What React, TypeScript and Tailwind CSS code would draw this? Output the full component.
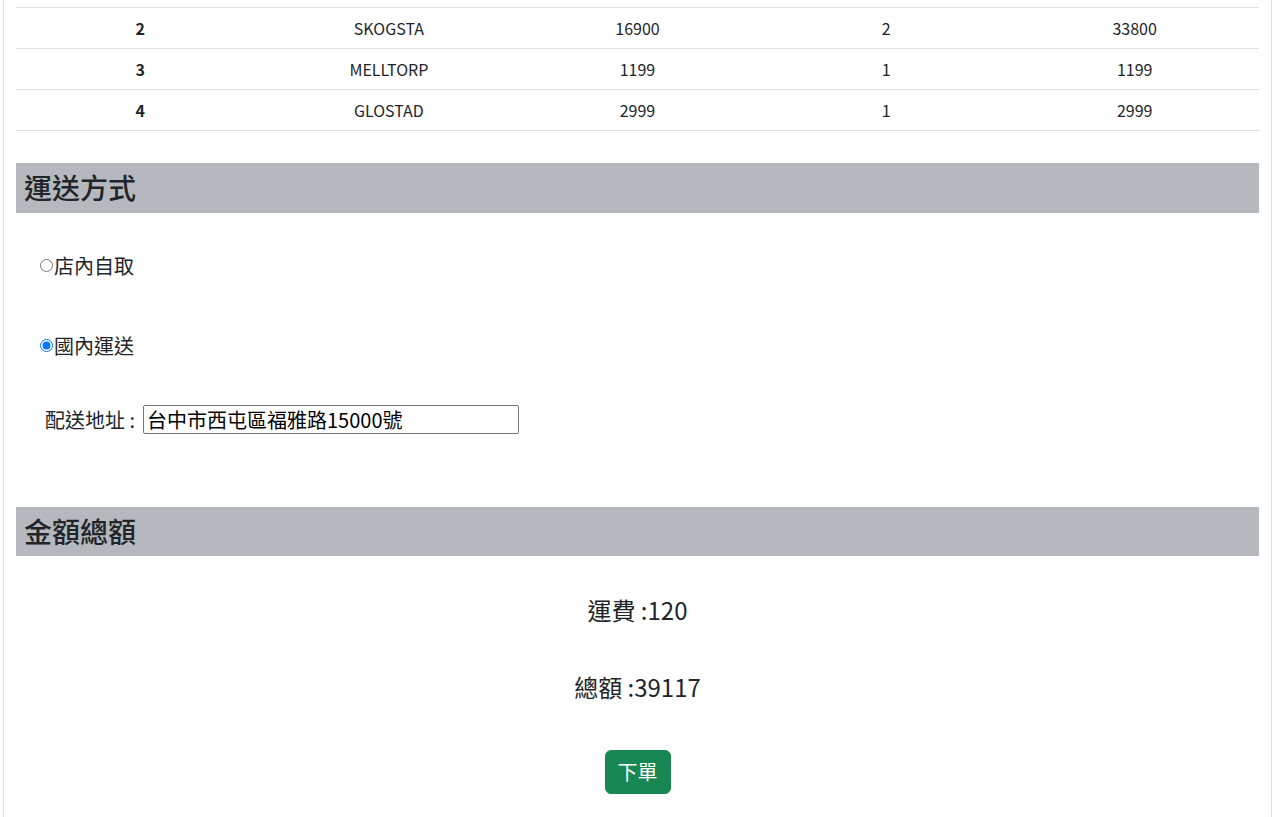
import { useState } from "react";

const rows = [
  { no: 2, name: "SKOGSTA", price: 16900, qty: 2, total: 33800 },
  { no: 3, name: "MELLTORP", price: 1199, qty: 1, total: 1199 },
  { no: 4, name: "GLOSTAD", price: 2999, qty: 1, total: 2999 },
];

const SectionBar = ({ title }: { title: string }) => (
  <div className="bg-[#b5b8bc] px-2 py-2">
    <h3 className="text-[28px] leading-[1.2] font-medium text-[#212529]">{title}</h3>
  </div>
);

export default function App() {
  const [method, setMethod] = useState("ship");
  const [address, setAddress] = useState("台中市西屯區福雅路15000號");

  return (
    <div
      className="min-h-[817px] bg-white text-[#212529]"
      style={{ fontFamily: '"Noto Sans CJK TC", "Noto Sans", sans-serif' }}
    >
      <div className="ml-[3px] mr-[1px] min-h-[817px] border-x border-[#dee2e6] px-3">
        <div className="h-[7px]" />
        <table className="w-full table-fixed border-collapse text-center text-[16px] leading-6">
          <tbody>
            {rows.map((r) => (
              <tr key={r.no} className="border-y border-[#dee2e6]">
                <th className="py-2 font-bold">{r.no}</th>
                <td className="py-2">{r.name}</td>
                <td className="py-2">{r.price}</td>
                <td className="py-2">{r.qty}</td>
                <td className="py-2">{r.total}</td>
              </tr>
            ))}
          </tbody>
        </table>

        <div className="mt-8">
          <SectionBar title="運送方式" />
        </div>

        <div className="flex flex-col pl-6">
          <label className="mt-[38px] flex h-[30px] items-center gap-[1px] text-[20px]">
            <input
              type="radio"
              name="ship"
              className="m-0 h-[13px] w-[13px]"
              checked={method === "pickup"}
              onChange={() => setMethod("pickup")}
            />
            店內自取
          </label>
          <label className="mt-[50px] flex h-[30px] items-center gap-[1px] text-[20px]">
            <input
              type="radio"
              name="ship"
              className="m-0 h-[13px] w-[13px]"
              checked={method === "ship"}
              onChange={() => setMethod("ship")}
            />
            國內運送
          </label>
          <div className="mt-[44px] flex h-[30px] items-center pl-[5px]">
            <span className="w-[98px] text-[20px]">配送地址 :</span>
            <input
              type="text"
              value={address}
              onChange={(e) => setAddress(e.target.value)}
              className="h-[29px] w-[376px] rounded-[2px] border border-[#767676] px-[3px] text-[20px] text-black"
            />
          </div>
        </div>

        <div className="mt-[72px]">
          <SectionBar title="金額總額" />
        </div>

        <div className="flex flex-col items-center text-[24px] leading-9">
          <p className="mt-[36px]">運費 :120</p>
          <p className="mt-[41px]">總額 :39117</p>
          <button className="mt-[45px] rounded-[6px] border border-[#198754] bg-[#198754] px-3 py-[6px] text-[20px] leading-[30px] text-white">
            下單
          </button>
        </div>
      </div>
    </div>
  );
}
